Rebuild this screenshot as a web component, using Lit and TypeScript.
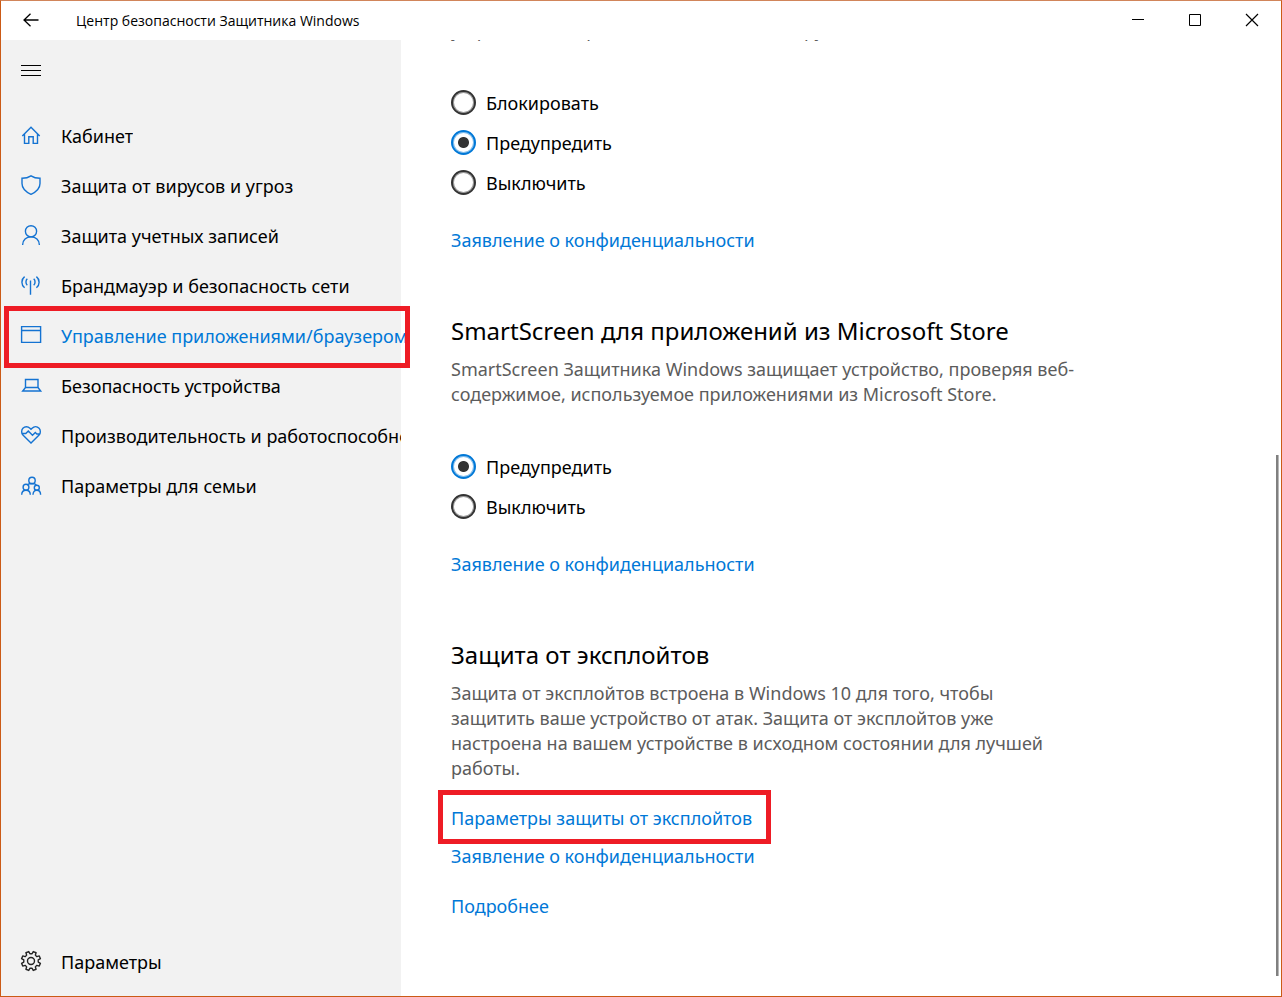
import { LitElement, html, svg, css, nothing } from "lit";
import { customElement, state } from "lit/decorators.js";

// Outline of an eight-toothed cog centred on (10, 10).
const cog = (() => {
  const points: string[] = [];
  for (let k = 0; k < 8; k++) {
    for (const [offset, r] of [[-14, 7.3], [-9, 9.7], [9, 9.7], [14, 7.3]]) {
      const a = ((22.5 + 45 * k + offset) * Math.PI) / 180;
      points.push(`${(10 + r * Math.cos(a)).toFixed(2)},${(10 + r * Math.sin(a)).toFixed(2)}`);
    }
  }
  return points.join(" ");
})();

const icons: Record<string, unknown> = {
  home: svg`<path d="M1.300 11 10 2.300l8.700 8.700M3.500 9.200v9.200h4.300v-6.700h4.400v6.700h4.300V9.200"/>`,
  shield: svg`<path d="M10 .8C12.500 2.500 15.500 3.300 19 3.300v5.200c0 5-4 8.500-9 10.800-5-2.300-9-5.800-9-10.800V3.300C4.500 3.300 7.500 2.500 10 .8z"/>`,
  person: svg`<circle cx="10" cy="6.300" r="5.600"/><path d="M1.600 20c0-5 3.700-8.100 8.400-8.100s8.400 3.100 8.400 8.100"/>`,
  signal: svg`<path d="M9.500 5.500v14.300M6.300 3.800c-1.800 1.500-1.800 5 0 6.500M12.700 3.800c1.800 1.500 1.800 5 0 6.500M3.600 1.600C0 4.400 0 9.900 3.600 12.700M15.400 1.600c3.600 2.800 3.600 8.300 0 11.100"/>`,
  window: svg`<path d="M.6 1.600h19v15.800H.6zM.6 5.500h19"/>`,
  laptop: svg`<path d="M4.500 4.500h12.500v8H4.500zM4.500 12.500l-2.800 3.500h18l-2.700-3.500"/>`,
  heart: svg`<path d="M1.900 10C.3 8.400.2 5 1.900 3.200c2-2 5-2 7 0L10 4.300l1.100-1.100c2-2 5-2 7 0 1.700 1.800 1.600 5.200 0 6.800L10 18zM1 8.500h3.800L7.300 6l4.200 4.200 2.800-2.700 1.500 1.500H19"/>`,
  family: svg`<circle cx="11" cy="5.500" r="3.200"/><circle cx="5" cy="12.200" r="2.900"/><circle cx="15.800" cy="12.700" r="2.500"/><path d="M6.800 9.500c.8-.7 2.200-1 4.200-1 2.400 0 3.800.7 4.300 1.600M.7 19.800c0-2.800 1.700-4.600 4.300-4.600s4.300 1.800 4.300 4.600M12 19.800c0-2.800 1.500-4.500 3.800-4.500s3.800 1.700 3.800 4.500"/>`,
  gear: svg`<circle cx="10" cy="10" r="3.500"/><polygon points=${cog} stroke-linejoin="round"/>`,
};

const icon = (name: string) =>
  html`<svg class="icon" viewBox="0 0 20 20" aria-hidden="true">${icons[name]}</svg>`;

const navItems = [
  ["home", "Кабинет"],
  ["shield", "Защита от вирусов и угроз"],
  ["person", "Защита учетных записей"],
  ["signal", "Брандмауэр и безопасность сети"],
  ["window", "Управление приложениями/браузером"],
  ["laptop", "Безопасность устройства"],
  ["heart", "Производительность и работоспособность устройства"],
  ["family", "Параметры для семьи"],
];

@customElement("app-root")
export class AppRoot extends LitElement {
  @state() private active = "window";

  static styles = css`
    :host {
      display: flex;
      flex-direction: column;
      box-sizing: border-box;
      height: 100vh;
      border: 1px solid #cb5a16;
      border-top-color: #d1855a;
      background: #fff;
      color: #000;
      font: 18px/25px "Noto Sans", "Open Sans", sans-serif;
    }
    * { box-sizing: border-box; }
    button { border: 0; padding: 0; background: none; color: inherit; font: inherit; }
    a { color: #0078d7; text-decoration: none; }
    p, h2 { margin: 0; }
    svg { display: block; fill: none; stroke: currentColor; overflow: visible; }
    .titlebar { display: flex; align-items: center; height: 39px; flex: none; padding-right: 1px; }
    .back { display: grid; place-items: center; width: 60px; height: 39px; padding-bottom: 1px; }
    .title { flex: 1; margin: 0; padding-left: 15px; font-family: "Open Sans", sans-serif; font-size: 14px; font-weight: 400; line-height: 20px; }
    .caption { display: grid; place-items: center; width: 57px; height: 39px; padding-bottom: 1px; }
    .body { display: flex; flex: 1; min-height: 0; }
    .sidebar { display: flex; flex-direction: column; width: 400px; flex: none; padding: 5px 0 9px; background: #f2f2f2; }
    .menu { display: grid; place-items: center; width: 60px; height: 50px; margin-bottom: 16px; }
    .nav { flex: 1; }
    .item { position: relative; display: flex; align-items: center; height: 50px; padding-left: 20px; gap: 20px; color: #000; }
    .icon { width: 20px; height: 20px; flex: none; margin-bottom: 2px; color: #1473d2; stroke-width: 1.4; }
    .settings .icon { color: #222; }
    .label { overflow: hidden; white-space: nowrap; }
    .current { color: #0078d7; }
    .current .label { overflow: visible; }
    .current::after {
      content: "";
      position: absolute;
      z-index: 1;
      inset: -5px -9px -7px 3px;
      border: 5px solid #ee1c25;
    }
    .main { position: relative; flex: 1; min-width: 0; display: flex; flex-direction: column; justify-content: flex-end; overflow: hidden; padding: 0 50px 77px; }
    .section { flex: none; display: flex; flex-direction: column; align-items: flex-start; max-width: 627px; }
    .section + .section { margin-top: 62px; }
    h2 { font-size: 24px; line-height: 32px; font-weight: 400; margin-bottom: 10px; }
    .text { color: #5c5c5c; }
    .choices { border: 0; margin: 39px 0 26px; padding: 0; }
    .choice { display: flex; align-items: center; gap: 10px; height: 40px; }
    .choice-text { padding-top: 2px; }
    .radio {
      appearance: none;
      width: 25px;
      height: 25px;
      margin: 0;
      border: 2px solid #333;
      border-radius: 50%;
      box-shadow: inset 0 0 0 1px #9a9a9a;
    }
    .radio:checked {
      border-color: #0078d7;
      box-shadow: inset 0 0 0 1px #7fbbeb;
      background: radial-gradient(circle, #333 5px, transparent 6px);
    }
    .marked { position: relative; margin: 25px 0 13px; }
    .marked::after {
      content: "";
      position: absolute;
      inset: -16px -19px -13px -13px;
      border: 5px solid #ee1c25;
      pointer-events: none;
    }
    .more { margin-top: 25px; }
    .thumb { position: absolute; right: 2px; top: 43.4%; bottom: 20px; width: 3px; background: #808080; border-right: 1px solid #b8b8b8; }
  `;

  private choices(group: string, options: string[]) {
    return html`<fieldset class="choices" aria-label="SmartScreen">
      ${options.map(
        (o) => html`<label class="choice">
          <input class="radio" type="radio" name=${group} ?checked=${o === "Предупредить"} />
          <span class="choice-text">${o}</span>
        </label>`
      )}
    </fieldset>`;
  }

  render() {
    return html`
      <header class="titlebar">
        <button class="back" aria-label="Назад">
          <svg width="16" height="14" viewBox="0 0 16 14" stroke-width="1.3"><path d="M15.500 7H.8M7.500.7 1 7l6.500 6.300" /></svg>
        </button>
        <h1 class="title">Центр безопасности Защитника Windows</h1>
        <button class="caption" aria-label="Свернуть">
          <svg width="12" height="12" viewBox="0 0 12 12"><path d="M0 5.500h12" /></svg>
        </button>
        <button class="caption" aria-label="Развернуть">
          <svg width="12" height="12" viewBox="0 0 12 12"><path d="M.5.5h11v11H.5z" /></svg>
        </button>
        <button class="caption" aria-label="Закрыть">
          <svg width="12" height="12" viewBox="0 0 12 12" stroke-width="1.200"><path d="m0 0 12 12M12 0 0 12" /></svg>
        </button>
      </header>
      <div class="body">
        <aside class="sidebar">
          <button class="menu" aria-label="Меню">
            <svg width="20" height="11" viewBox="0 0 20 11"><path d="M0 .5h20M0 5.500h20M0 10.500h20" /></svg>
          </button>
          <nav class="nav">
            ${navItems.map(
              ([id, label]) => html`<a
                class="item ${id === this.active ? "current" : ""}"
                href="#${id}"
                aria-current=${id === this.active ? "page" : nothing}
                @click=${() => (this.active = id)}
                >${icon(id)}<span class="label">${label}</span></a
              >`
            )}
          </nav>
          <a class="item settings" href="#settings">${icon("gear")}<span class="label">Параметры</span></a>
        </aside>
        <main class="main">
          <section class="section">
            <p class="text">устройство от вредоносных сайтов и загрузок.</p>
            ${this.choices("edge", ["Блокировать", "Предупредить", "Выключить"])}
            <a href="#privacy">Заявление о конфиденциальности</a>
          </section>
          <section class="section">
            <h2>SmartScreen для приложений из Microsoft Store</h2>
            <p class="text">SmartScreen Защитника Windows защищает устройство, проверяя веб-содержимое, используемое приложениями из Microsoft Store.</p>
            ${this.choices("store", ["Предупредить", "Выключить"])}
            <a href="#privacy">Заявление о конфиденциальности</a>
          </section>
          <section class="section">
            <h2>Защита от эксплойтов</h2>
            <p class="text">Защита от эксплойтов встроена в Windows 10 для того, чтобы защитить ваше устройство от атак. Защита от эксплойтов уже настроена на вашем устройстве в исходном состоянии для лучшей работы.</p>
            <a class="marked" href="#exploit">Параметры защиты от эксплойтов</a>
            <a href="#privacy">Заявление о конфиденциальности</a>
            <a class="more" href="#more">Подробнее</a>
          </section>
          <div class="thumb"></div>
        </main>
      </div>
    `;
  }
}
